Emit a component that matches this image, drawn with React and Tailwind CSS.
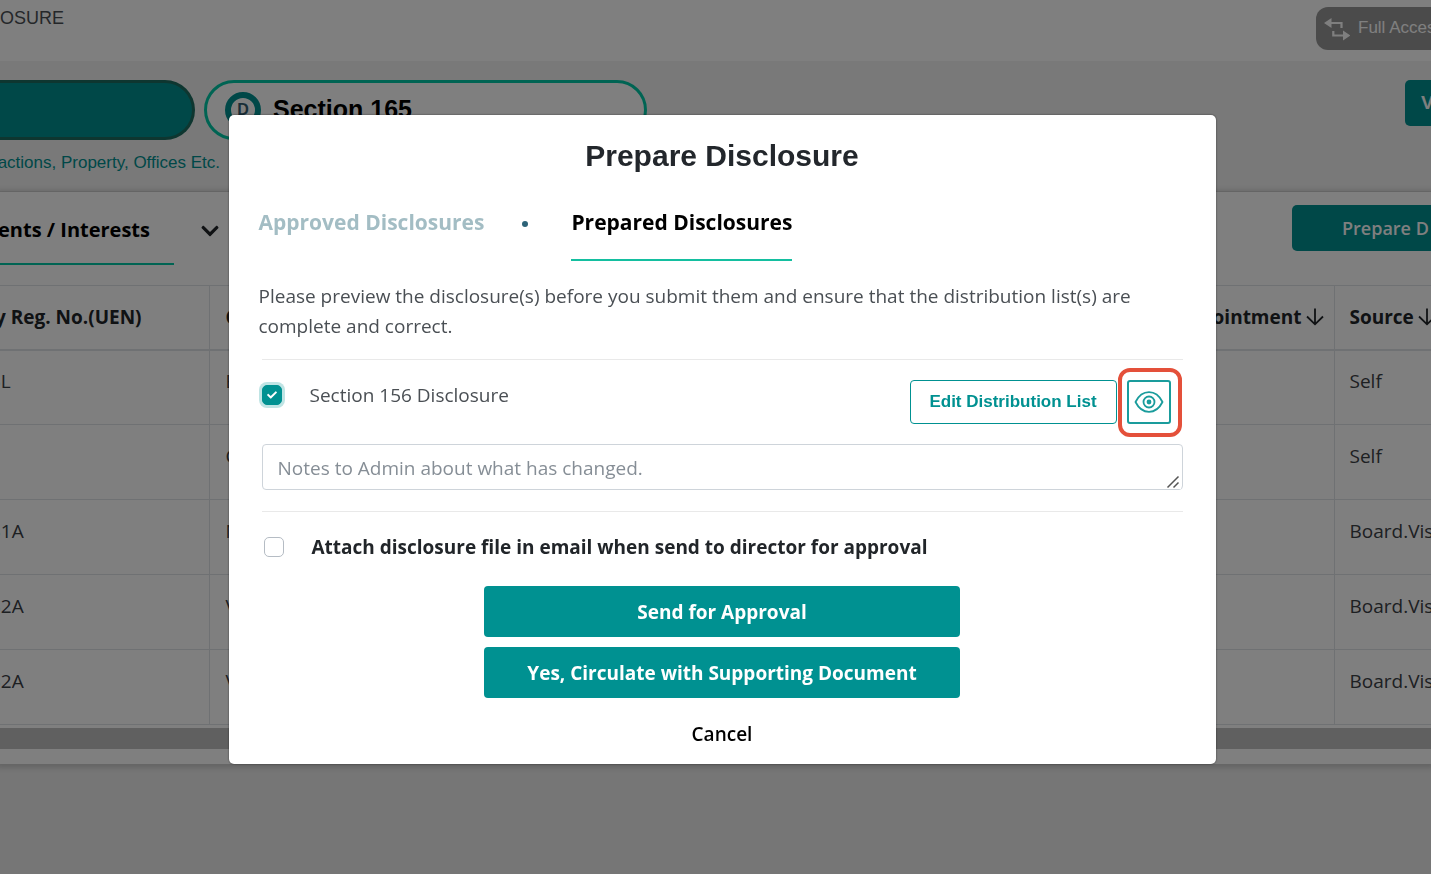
import React, { useState } from "react";
import { FaCheck, FaChevronDown } from "react-icons/fa";

const rows = [
  { uen: "5L", name: "B", source: "Self" },
  { uen: "", name: "C", source: "Self" },
  { uen: "31A", name: "N", source: "Board.Vis" },
  { uen: "32A", name: "V", source: "Board.Vis" },
  { uen: "32A", name: "V", source: "Board.Vis" },
];

const SwapIcon = () => (
  <svg width="26" height="24" viewBox="0 0 26 24" fill="none" className="shrink-0" aria-hidden="true">
    <path d="M7 6H17.500V11M9.300 14V18.500H19" stroke="currentColor" strokeWidth="2.200" />
    <path d="M0 6L7.500 1V11ZM26.500 18.500L19 13.500V23.500Z" fill="currentColor" />
  </svg>
);

const SortIcon = () => (
  <svg
    width="18"
    height="18"
    viewBox="0 0 18 18"
    fill="none"
    stroke="currentColor"
    strokeWidth="1.800"
    className="shrink-0"
    aria-hidden="true"
  >
    <path d="M9 0.500V16M1 8.500L9 16.300L17 8.500" />
  </svg>
);

const EyeIcon = () => (
  <svg width="30" height="24" viewBox="0 0 30 24" fill="none" stroke="currentColor" aria-hidden="true">
    <path
      d="M1.500 12C4.500 6 9 2.200 15 2.200S25.500 6 28.500 12C25.500 18 21 21.800 15 21.800S4.500 18 1.500 12Z"
      strokeWidth="1.800"
      strokeLinejoin="round"
    />
    <circle cx="15" cy="12" r="5.500" strokeWidth="1.800" />
    <circle cx="15" cy="12" r="2.400" fill="currentColor" stroke="none" />
  </svg>
);

const ResizeGrip = () => (
  <svg
    width="15"
    height="15"
    viewBox="0 0 15 15"
    className="pointer-events-none absolute right-[2px] bottom-px bg-white"
    aria-hidden="true"
  >
    <path d="M1.500 13.500L12.500 2.500M7.500 13.500L12.500 8.500" stroke="#555" strokeWidth="1.500" />
  </svg>
);

const Header = () => (
  <header className="flex h-[61px] items-start justify-between bg-white pt-[7px]">
    <p className="font-['Liberation_Sans',sans-serif] text-[18px] leading-[22px] text-[#4a4f54]">
      OSURE
    </p>
    <button className="flex h-[43px] w-[115px] items-center gap-2 overflow-hidden rounded-l-xl bg-[#979797] pl-2 font-['Liberation_Sans',sans-serif] text-[17px] whitespace-nowrap text-white">
      <SwapIcon />
      <span className="pb-[2px]">Full Acces</span>
    </button>
  </header>
);

const Sections = () => (
  <section className="flex h-[131px] items-start border-b border-[#e4e4e4] bg-[#f2f2f2] pt-[19px] font-['Liberation_Sans',sans-serif]">
    <div className="w-[220px] shrink-0">
      <button
        aria-label="Section 156"
        className="block h-[60px] w-[195px] rounded-r-full border-y-3 border-r-3 border-[#1c6c60] bg-[#009191]"
      />
      <p className="flex justify-end pt-3 text-[17px] leading-[22px] whitespace-nowrap text-[#009191]">
        actions, Property, Offices Etc.
      </p>
    </div>
    <button className="-ml-4 flex h-[60px] w-[443px] items-center gap-3 rounded-full border-3 border-[#00c9a7] bg-white px-[18px] text-[25px] font-bold text-black">
      <span className="flex size-[36px] items-center justify-center rounded-full border-6 border-[#009191] text-[16px] text-[#335c70]">
        D
      </span>
      <span>Section 165</span>
    </button>
    <button className="ml-auto h-[46px] w-[26px] overflow-hidden rounded-l-[5px] bg-[#009191] pl-4 text-left text-[19px] font-bold text-white">
      V
    </button>
  </section>
);

const Register = () => (
  <section className="bg-white pb-[15px] shadow-[0_1px_5px_3px_rgba(0,0,0,0.15)]">
    <div className="flex h-[93px] items-start justify-between pt-[13px]">
      <div className="flex items-start">
        <a
          href="#interests"
          className="flex h-[60px] w-[174px] justify-end overflow-hidden border-b-2 border-[#00c9a7] pt-[10px] pr-6 text-[20px] leading-[30px] font-bold whitespace-nowrap text-black"
        >
          ents / Interests
        </a>
        <FaChevronDown className="mt-4 ml-[26px] size-5 text-[#212529]" />
      </div>
      <button className="h-[46px] w-[139px] overflow-hidden rounded-l-[5px] bg-[#009191] pl-[50px] text-left text-[18px] font-semibold whitespace-nowrap text-white">
        Prepare D
      </button>
    </div>
    <table className="w-full table-fixed border-collapse text-left text-[19px] whitespace-nowrap text-[#3b4045]">
      <thead>
        <tr className="h-16 border-t border-b-2 border-t-[#dee2e6] border-b-[#dee2e6] text-[#212529]">
          <th className="w-[209px] overflow-hidden border-r border-[#dee2e6] font-bold">
            <span className="-ml-[5px]">y Reg. No.(UEN)</span>
          </th>
          <th className="overflow-hidden pl-4 font-bold">C</th>
          <th className="w-[200px] border-r border-[#dee2e6] pr-[10px] font-bold">
            <span className="flex items-center justify-end gap-1">
              Appointment <SortIcon />
            </span>
          </th>
          <th className="w-[97px] overflow-hidden pl-[15px] font-bold">
            <span className="flex items-center gap-1">
              Source <SortIcon />
            </span>
          </th>
        </tr>
      </thead>
      <tbody>
        {rows.map((row, index) => (
          <tr key={index} className="h-[75px] border-b border-[#dee2e6]">
            <td className="border-r border-[#dee2e6] pb-3">
              <span className="-ml-[10px]">{row.uen}</span>
            </td>
            <td className="pb-3 pl-4">{row.name}</td>
            <td className="border-r border-[#dee2e6]" />
            <td className="overflow-hidden pb-3 pl-[15px]">{row.source}</td>
          </tr>
        ))}
      </tbody>
    </table>
    <div className="mt-[3px] h-[21px] bg-[#c1c1c1]" />
  </section>
);

const PrepareModal = () => {
  const [section, setSection] = useState(true);
  const [attach, setAttach] = useState(false);

  return (
    <div className="fixed inset-0 flex items-start justify-center bg-black/50 pt-[115px] pl-[13px]">
      <div
        role="dialog"
        aria-modal="true"
        aria-labelledby="modal-title"
        className="w-full max-w-[987px] rounded-[5px] bg-white px-[30px] pt-[23px] pb-[15px] shadow-[0_0_2px_rgba(0,0,0,0.6)]"
      >
        <h2
          id="modal-title"
          className="text-center font-['Liberation_Sans',sans-serif] text-[30px] leading-9 font-bold text-[#23272c]"
        >
          Prepare Disclosure
        </h2>

        <nav className="mt-[33px] flex items-start text-[21px] leading-[30px] font-bold">
          <a href="#approved" className="text-[#a3bdc4]">
            Approved Disclosures
          </a>
          <span className="mt-[14px] mr-[43px] ml-[38px] size-[6px] rounded-full bg-[#2d6378]" />
          <a href="#prepared" className="border-b-2 border-[#14bfa0] pb-[22px] text-black">
            Prepared Disclosures
          </a>
        </nav>

        <p className="mt-5 text-[19px] leading-[30px] text-[#4a4f54]">
          Please preview the disclosure(s) before you submit them and ensure that the distribution list(s) are
          complete and correct.
        </p>

        <div className="mt-[18px] mr-[3px] ml-[3px] border-y border-[#e9e9e9] pt-5 pb-[21px]">
          <div className="flex items-start justify-between">
            <label className="flex h-[30px] items-center gap-7 text-[19px] text-[#4a4f54]">
              <span className="relative flex size-5">
                <input
                  type="checkbox"
                  checked={section}
                  onChange={(e) => setSection(e.target.checked)}
                  className="size-5 appearance-none rounded-[5px] border border-[#adb5bd] ring-[#bfe4e4] checked:border-[#009191] checked:bg-[#009191] checked:ring-3"
                />
                {section && (
                  <FaCheck className="pointer-events-none absolute inset-[5px] size-[10px] text-white" />
                )}
              </span>
              Section 156 Disclosure
            </label>
            <div className="flex gap-[10px] pr-3">
              <button className="h-11 w-[207px] rounded-[4px] border border-[#009191] font-['Liberation_Sans',sans-serif] text-[17px] font-bold text-[#009191]">
                Edit Distribution List
              </button>
              <div className="relative">
                <button
                  aria-label="Preview"
                  className="flex size-11 items-center justify-center rounded-[3px] border-2 border-[#1a9c9c] text-[#1a9c9c]"
                >
                  <EyeIcon />
                </button>
                <span className="pointer-events-none absolute -top-3 -right-[11px] -bottom-[13px] -left-[9px] rounded-[12px] border-4 border-[#e4503a]" />
              </div>
            </div>
          </div>
          <div className="relative mt-5">
            <textarea
              rows="1"
              aria-label="Notes to Admin"
              placeholder="Notes to Admin about what has changed."
              className="block h-[46px] w-full rounded-[4px] border border-[#ced4da] px-[15px] py-2 text-[19px] leading-[30px] text-[#495057] placeholder:text-[#868e96]"
            />
            <ResizeGrip />
          </div>
        </div>

        <label className="mt-5 ml-[5px] flex items-center gap-7 text-[19px] leading-[30px] font-bold text-[#212529]">
          <input
            type="checkbox"
            checked={attach}
            onChange={(e) => setAttach(e.target.checked)}
            className="size-5 appearance-none rounded-[5px] border border-[#b5bcc4] checked:bg-[#009191]"
          />
          Attach disclosure file in email when send to director for approval
        </label>

        <div className="mx-auto mt-6 flex max-w-[476px] flex-col gap-[10px] text-[19px] font-bold text-white">
          <button className="h-[51px] rounded-[4px] bg-[#009191] pt-[2px]">Send for Approval</button>
          <button className="h-[51px] rounded-[4px] bg-[#009191] pt-[2px]">
            Yes, Circulate with Supporting Document
          </button>
        </div>
        <button className="mx-auto mt-[21px] block text-[19px] leading-[30px] font-semibold text-black">
          Cancel
        </button>
      </div>
    </div>
  );
};

const App = () => {
  return (
    <div className="min-h-screen overflow-hidden bg-[#ececec] font-['Open_Sans',sans-serif]">
      <Header />
      <Sections />
      <Register />
      <PrepareModal />
    </div>
  );
};

export default App;
